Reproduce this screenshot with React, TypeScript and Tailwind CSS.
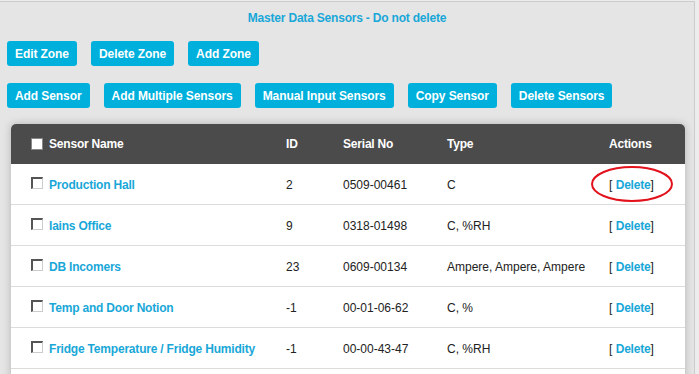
const zoneButtons = ["Edit Zone", "Delete Zone", "Add Zone"];
const sensorButtons = [
  "Add Sensor",
  "Add Multiple Sensors",
  "Manual Input Sensors",
  "Copy Sensor",
  "Delete Sensors",
];

const sensors = [
  { name: "Production Hall", id: "2", serial: "0509-00461", type: "C" },
  { name: "Iains Office", id: "9", serial: "0318-01498", type: "C, %RH" },
  { name: "DB Incomers", id: "23", serial: "0609-00134", type: "Ampere, Ampere, Ampere" },
  { name: "Temp and Door Notion", id: "-1", serial: "00-01-06-62", type: "C, %" },
  { name: "Fridge Temperature / Fridge Humidity", id: "-1", serial: "00-00-43-47", type: "C, %RH" },
];

const cols = "grid grid-cols-[275px_57px_104px_162px_1fr]";

function Button({ label }: { label: string }) {
  return (
    <button className="h-[25px] px-[8px] rounded-[3px] bg-[#00b0dc] text-white text-[12px] font-bold tracking-[-0.08px] leading-none">
      {label}
    </button>
  );
}

function Checkbox({ header }: { header?: boolean }) {
  return (
    <span
      className={
        header
          ? "w-[12px] h-[12px] bg-white border border-[#888] shrink-0"
          : "w-[12px] h-[12px] bg-white border-t-[2px] border-l-[2px] border-b border-r border-t-[#555] border-l-[#555] border-b-[#ccc] border-r-[#ccc] shrink-0 -mt-[5px]"
      }
    />
  );
}

function Row({ s, circled }: { s: (typeof sensors)[number]; circled?: boolean }) {
  return (
    <div className={`${cols} h-[41px] items-center border-b border-[#dcdcdc] text-[12px] text-[#222] pt-[2px]`}>
      <div className="flex items-center gap-[6px] pl-[20px]">
        <Checkbox />
        <span className="font-bold tracking-[-0.2px] text-[#19a7d8]">{s.name}</span>
      </div>
      <div>{s.id}</div>
      <div>{s.serial}</div>
      <div>{s.type}</div>
      <div className="relative">
        <span className="text-[#222]">[ </span>
        <span className="font-bold tracking-[-0.2px] text-[#19a7d8]">Delete</span>
        <span className="text-[#222]">]</span>
        {circled && (
          <svg
            className="absolute left-[-19px] top-[-11px]"
            width="84"
            height="38"
            viewBox="0 0 84 38"
          >
            <ellipse cx="42" cy="19" rx="40" ry="17" fill="none" stroke="#e2121c" strokeWidth="2" />
          </svg>
        )}
      </div>
    </div>
  );
}

export default function App() {
  return (
    <div className="w-[699px] h-[374px] overflow-hidden bg-[#ececec] font-['Liberation_Sans',Arial,sans-serif]">
      <div className="ml-[-1px] mt-[1px] w-[696px] h-[380px] bg-[#e5e5e5] border border-[#cccccc] pl-[7px] pr-[9px]">
        <div className="pt-[9px] text-center text-[12px] font-bold tracking-[-0.2px] leading-[14px] text-[#19a7d8] pl-[2px]">
          Master Data Sensors - Do not delete
        </div>
        <div className="flex gap-[14px] mt-[16px]">
          {zoneButtons.map((b) => (
            <Button key={b} label={b} />
          ))}
        </div>
        <div className="flex gap-[14px] mt-[17px]">
          {sensorButtons.map((b) => (
            <Button key={b} label={b} />
          ))}
        </div>
        <div className="mt-[16px] ml-[4px] bg-white rounded-t-[5px] shadow-[0_0_9px_rgba(0,0,0,0.22)] pb-[12px]">
          <div className={`${cols} h-[40px] items-center rounded-t-[5px] bg-[#4b4b4b] text-[12px] font-bold tracking-[-0.2px] text-white`}>
            <div className="flex items-center gap-[6px] pl-[20px]">
              <Checkbox header />
              <span>Sensor Name</span>
            </div>
            <div>ID</div>
            <div>Serial No</div>
            <div>Type</div>
            <div>Actions</div>
          </div>
          {sensors.map((s, i) => (
            <Row key={s.name} s={s} circled={i === 0} />
          ))}
        </div>
      </div>
    </div>
  );
}
